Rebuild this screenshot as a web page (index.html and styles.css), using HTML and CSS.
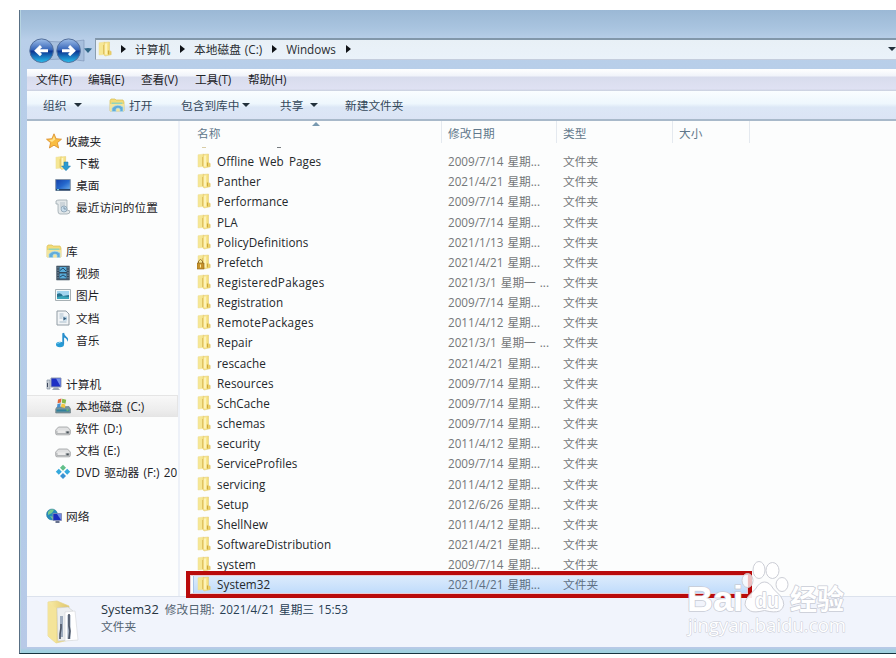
FILE: index.html
```html
<!DOCTYPE html>
<html lang="zh-CN">
<head>
<meta charset="utf-8">
<title>System32</title>
<link rel="stylesheet" href="styles.css">
</head>
<body>
<svg class="defs" width="0" height="0">
<defs>
<linearGradient id="gold" x1="0" x2="1"><stop offset="0" stop-color="#f3dc80"/><stop offset=".5" stop-color="#f8e78f"/><stop offset="1" stop-color="#e6c656"/></linearGradient>
<linearGradient id="orb" x1="0" x2="0" y1="0" y2="1"><stop offset="0" stop-color="#9dbde8"/><stop offset=".46" stop-color="#3565b8"/><stop offset=".52" stop-color="#0c3592"/><stop offset="1" stop-color="#28c0ee"/></linearGradient>
<linearGradient id="screen" x1="0" x2="1" y1="0" y2="1"><stop offset="0" stop-color="#163fa5"/><stop offset=".5" stop-color="#2467cc"/><stop offset="1" stop-color="#73b5f0"/></linearGradient>
<linearGradient id="big" x1="0" x2="1"><stop offset="0" stop-color="#f9eda9"/><stop offset="1" stop-color="#e0c568"/></linearGradient>
<symbol id="folder" viewBox="0 0 14 16"><path d="M1 1.800 7 1v12.500L1 14z" fill="#f6e794" stroke="#ecdc98" stroke-width=".5"/><path d="M6 1.500 11.500 1v8.500l1.700 1v3.200L7 15l-1-1.200z" fill="url(#gold)" stroke="#e3ca72" stroke-width=".5"/><path d="M5.500 4v9" stroke="#dfc261" stroke-width="1"/><path d="M8 2.500v11" stroke="#fff7c4" stroke-width="1.600"/><path d="M10.500 9.500v4" stroke="#cfa93c" stroke-width="1.200"/></symbol>
<symbol id="library" viewBox="0 0 16 16"><path d="M1 3.500 2 2h4l1 1h7l1 2v9H1z" fill="#f3dc78" stroke="#d8bd55" stroke-width=".7"/><path d="M2.500 5.500h11V9h-11z" fill="#93d5bc"/><path d="M1 7h14v7H1z" fill="#f2e59c"/><path d="M3 14.5V11q5-5 11-1v4.5h-3V12q-2-2-4 0v2.5z" fill="#61acd9" stroke="#aedaf0" stroke-width=".7"/></symbol>
<symbol id="drive" viewBox="0 0 16 16"><path d="M3.500 7h9L15.300 10v3.500q0 1.300-1.300 1.300H2q-1.300 0-1.300-1.300V10z" fill="#e0e1e2" stroke="#9a9c9e" stroke-width=".8"/><path d="M1.300 11h13.400v3H1.300z" fill="#b2b5b7"/><path d="M2.500 10.500h8v2.500h-8z" fill="#ececec"/><path d="M11.500 11.500h2.200v1.800h-2.200z" fill="#475057"/></symbol>
</defs>
</svg>
<main class="window">
  <header class="address-row">
    <svg class="orbs" viewBox="0 0 66 27"><path d="M11 2q22 4 44 0v21q-22-4-44 0z" fill="#a7bfdd" stroke="#7a91b3" stroke-width=".6"/><circle cx="12.6" cy="12.700" r="11.8" fill="url(#orb)" stroke="#536f9b"/><circle cx="39.6" cy="12.700" r="11.8" fill="url(#orb)" stroke="#536f9b"/><path d="M12 8.200 7.3 12.700l4.7 4.5M8 12.700h11M40 8.200l4.700 4.500-4.700 4.500M44 12.700H33" fill="none" stroke="#fff" stroke-width="3"/><path d="m55 10.500 4-.5 4 .5-4 4.500z" fill="#2f6688"/></svg>
    <div class="address">
      <svg class="folder" viewBox="0 0 14 16"><use href="#folder"/></svg>
      <i class="tri"></i><span>计算机</span><i class="tri"></i><span>本地磁盘 (C:)</span><i class="tri"></i><span>Windows</span><i class="tri"></i><i class="down"></i>
    </div>
  </header>
  <nav class="menu"><span>文件(F)</span><span>编辑(E)</span><span>查看(V)</span><span>工具(T)</span><span>帮助(H)</span></nav>
  <nav class="toolbar"><span>组织</span><i class="down"></i><svg class="icon" viewBox="0 0 16 16"><use href="#library"/></svg><span>打开</span><span>包含到库中</span><i class="down"></i><span>共享</span><i class="down"></i><span>新建文件夹</span></nav>
  <section class="body">
    <aside class="side">
      <div class="node"><svg class="icon" viewBox="0 0 16 16"><path d="m8 .8 2.100 4.900 5.400.5-4.100 3.500 1.200 5.300L8 12.200 3.400 15l1.200-5.300L.5 6.200l5.400-.5z" fill="#f9bd42" stroke="#d98b27" stroke-width=".8"/><path d="m8 3 1.200 3.500L6 9 3 7l3.500-.5z" fill="#ffe38e"/></svg><span>收藏夹</span></div>
      <div class="node child"><svg class="icon" viewBox="0 0 16 16"><use href="#folder" x="0" y="0" width="13" height="16"/><path d="M9 7h4v4h2.500L11 15.700 6.500 11H9z" fill="#2c9bd0" stroke="#207aa9" stroke-width=".5"/></svg><span>下载</span></div>
      <div class="node child"><svg class="icon" viewBox="0 0 16 16"><path d="M.7 2.500h14.600v11H.7z" fill="url(#screen)" stroke="#8494a8"/><path d="M1 12.700h14" stroke="#244066" stroke-width="1.500"/><path d="M2 12.700h2" stroke="#8ee1ee"/></svg><span>桌面</span></div>
      <div class="node child"><svg class="icon" viewBox="0 0 16 16"><path d="M1 2q1-1 3-1h8v10l3 1q0 3-3 3H5q-2 0-2-3V5H1z" fill="#e3e8ea" stroke="#9da8ae" stroke-width=".8"/><path d="M5 4h5M5 6h5M5 8h4" stroke="#a9b8c3" stroke-width=".8"/><circle cx="9" cy="10" r="3" fill="#c8dceb" stroke="#8098aa" stroke-width=".7"/><path d="M9 8v2h2" stroke="#617f94" fill="none" stroke-width=".7"/></svg><span>最近访问的位置</span></div>
      <div class="gap"></div>
      <div class="node"><svg class="icon" viewBox="0 0 16 16"><use href="#library"/></svg><span>库</span></div>
      <div class="node child"><svg class="icon" viewBox="0 0 16 16"><path d="M1.500 1h13v14h-13z" fill="#33485b" stroke="#687884" stroke-width=".7"/><path d="M4.500 2h7v5h-7zM4.500 8.500h7v5h-7z" fill="#58acd9"/><path d="M5 5.500 8 3l3 3M5 12l3-2 3 2" stroke="#254b69" fill="none"/><path d="M3 2v12M13 2v12" stroke="#8fa3b0" stroke-width=".9" stroke-dasharray="1.500 1"/></svg><span>视频</span></div>
      <div class="node child"><svg class="icon" viewBox="0 0 16 16"><path d="M.5 2.500h15v11H.5z" fill="#f5f8f8" stroke="#a7b0b4"/><path d="M2 4h12v8H2z" fill="#a1d4ee"/><path d="M2 7q4-2 6 2l6-1v4H2z" fill="#25718f"/><path d="m2 10 5-1 7 1v2H2z" fill="#3ba5b9"/></svg><span>图片</span></div>
      <div class="node child"><svg class="icon" viewBox="0 0 16 16"><path d="M2 1h9l3 3v11H2z" fill="#f2f5f7" stroke="#929da5"/><path d="M4.500 4h4M4.500 6h4M4.500 8h3M4.500 12h7" stroke="#a8bdcc"/><path d="M8 6.500h4v4H8z" fill="#b3d1e4"/><path d="m8.500 7 3 1.500-3 2z" fill="#385b78"/></svg><span>文档</span></div>
      <div class="node child"><svg class="icon" viewBox="0 0 16 16"><ellipse cx="5" cy="12.500" rx="4" ry="2.800" fill="#279bd5"/><path d="M7.300 12V1.200l1.800-.5q.2 2.800 2.600 4.300 2.700 2 .3 4.700.7-3-2.900-4.200v6.800z" fill="#298fcd"/><path d="M2.500 12q1-2 3-1.500" stroke="#8fd8f5" fill="none"/></svg><span>音乐</span></div>
      <div class="gap"></div>
      <div class="node"><svg class="icon" viewBox="0 0 16 16"><path d="M1 4h3v9H1z" fill="#c8ced6" stroke="#8390a1" stroke-width=".7"/><path d="M1.500 7v4" stroke="#39455a"/><path d="M5 2h10v9H5z" fill="#1c2ec4" stroke="#929cb0"/><path d="m10 2.500 4.500 0v8z" fill="#718bea"/><path d="M8 11.500h4l2 2.500H6z" fill="#9ba5b5"/></svg><span>计算机</span></div>
      <div class="node child active"><svg class="icon" viewBox="0 0 16 16"><path d="m2 9 12-.5 1.500 2.500v4H.7v-4z" fill="#75949d" stroke="#61747a" stroke-width=".6"/><path d="M1.500 11.500h13v2h-13z" fill="#2f809c"/><path d="M11.500 12h2" stroke="#90dc4f"/><path d="m3 1.500 3.500-1L6 4.500l-3.500.7z" fill="#df683c"/><path d="m7.200.7 4 1-.7 4-3.700-1z" fill="#85b94a"/><path d="m2.400 5.900 3.500-.6L5 9l-3 .7z" fill="#4691d0"/><path d="m6.600 5.600 3.800 1-.5 3.400-4-1z" fill="#f2c641"/></svg><span>本地磁盘 (C:)</span></div>
      <div class="node child"><svg class="icon" viewBox="0 0 16 16"><use href="#drive"/></svg><span>软件 (D:)</span></div>
      <div class="node child"><svg class="icon" viewBox="0 0 16 16"><use href="#drive"/></svg><span>文档 (E:)</span></div>
      <div class="node child"><svg class="icon" viewBox="0 0 16 16"><path d="m8 .8 3 3-3 3-3-3z" fill="#61bf8a"/><path d="m3.800 4.800 3 3-3 3-3-3zM12.200 4.800l3 3-3 3-3-3z" fill="#35a9dd"/><path d="m8 8.900 3 3-3 3-3-3z" fill="#3a93d4"/></svg><span>DVD 驱动器 (F:) 20</span></div>
      <div class="gap"></div>
      <div class="node"><svg class="icon" viewBox="0 0 16 16"><circle cx="6" cy="6.500" r="5.500" fill="#258bbb" stroke="#307b9d" stroke-width=".5"/><path d="M2 4q3-4 6-2L6 5 2 7zM4 8l4 1-1 3z" fill="#78ca8c"/><path d="M7 5.500h8.500v7H7z" fill="#1a2dbd" stroke="#858fb1" stroke-width=".8"/><path d="m11 6 4 0v6z" fill="#6f8be5"/><path d="M9.500 13h4v2h-4z" fill="#66718c"/></svg><span>网络</span></div>
    </aside>
    <div class="files">
      <div class="columns"><span>名称<svg class="sort" viewBox="0 0 8 4"><path d="m0 4 4-4 4 4z" fill="#7899b0"/></svg></span><span>修改日期</span><span>类型</span><span>大小</span></div>
      <div class="cut"><i></i><i></i></div>
      <div class="rows">
        <div class="row"><svg class="folder"><use href="#folder"/></svg><b>Offline Web Pages</b><span>2009/7/14 星期...</span><span>文件夹</span></div>
        <div class="row"><svg class="folder"><use href="#folder"/></svg><b>Panther</b><span>2021/4/21 星期...</span><span>文件夹</span></div>
        <div class="row"><svg class="folder"><use href="#folder"/></svg><b>Performance</b><span>2009/7/14 星期...</span><span>文件夹</span></div>
        <div class="row"><svg class="folder"><use href="#folder"/></svg><b>PLA</b><span>2009/7/14 星期...</span><span>文件夹</span></div>
        <div class="row"><svg class="folder"><use href="#folder"/></svg><b>PolicyDefinitions</b><span>2021/1/13 星期...</span><span>文件夹</span></div>
        <div class="row"><svg class="folder"><use href="#folder"/><path d="M1.500 9V7q2-3 4 0v2" fill="none" stroke="#9a7431"/><path d="M0 9h7v6H0z" fill="#c6922b" stroke="#8c651b" stroke-width=".6"/><path d="M3.500 10.500v3" stroke="#fff0a2"/></svg><b>Prefetch</b><span>2021/4/21 星期...</span><span>文件夹</span></div>
        <div class="row"><svg class="folder"><use href="#folder"/></svg><b class="wide">RegisteredPakages</b><span>2021/3/1 星期一 ...</span><span>文件夹</span></div>
        <div class="row"><svg class="folder"><use href="#folder"/></svg><b>Registration</b><span>2009/7/14 星期...</span><span>文件夹</span></div>
        <div class="row"><svg class="folder"><use href="#folder"/></svg><b class="wide">RemotePackages</b><span>2011/4/12 星期...</span><span>文件夹</span></div>
        <div class="row"><svg class="folder"><use href="#folder"/></svg><b>Repair</b><span>2021/3/1 星期一 ...</span><span>文件夹</span></div>
        <div class="row"><svg class="folder"><use href="#folder"/></svg><b>rescache</b><span>2021/4/21 星期...</span><span>文件夹</span></div>
        <div class="row"><svg class="folder"><use href="#folder"/></svg><b>Resources</b><span>2009/7/14 星期...</span><span>文件夹</span></div>
        <div class="row"><svg class="folder"><use href="#folder"/></svg><b>SchCache</b><span>2009/7/14 星期...</span><span>文件夹</span></div>
        <div class="row"><svg class="folder"><use href="#folder"/></svg><b>schemas</b><span>2009/7/14 星期...</span><span>文件夹</span></div>
        <div class="row"><svg class="folder"><use href="#folder"/></svg><b>security</b><span>2011/4/12 星期...</span><span>文件夹</span></div>
        <div class="row"><svg class="folder"><use href="#folder"/></svg><b>ServiceProfiles</b><span>2009/7/14 星期...</span><span>文件夹</span></div>
        <div class="row"><svg class="folder"><use href="#folder"/></svg><b>servicing</b><span>2011/4/12 星期...</span><span>文件夹</span></div>
        <div class="row"><svg class="folder"><use href="#folder"/></svg><b>Setup</b><span>2012/6/26 星期...</span><span>文件夹</span></div>
        <div class="row"><svg class="folder"><use href="#folder"/></svg><b>ShellNew</b><span>2011/4/12 星期...</span><span>文件夹</span></div>
        <div class="row"><svg class="folder"><use href="#folder"/></svg><b>SoftwareDistribution</b><span>2021/4/21 星期...</span><span>文件夹</span></div>
        <div class="row"><svg class="folder"><use href="#folder"/></svg><b>system</b><span>2009/7/14 星期...</span><span>文件夹</span></div>
        <div class="row selected"><svg class="folder"><use href="#folder"/></svg><b>System32</b><span>2021/4/21 星期...</span><span>文件夹</span></div>
      </div>
    </div>
  </section>
  <footer class="details">
    <svg class="preview" viewBox="0 0 32 44"><path d="m1 2 9-1 12 5v34L9 43 1 36z" fill="url(#big)" stroke="#e5d48b" stroke-width=".7"/><path d="m10 8 11-1 5 4v29l-15 1z" fill="#eceef0" stroke="#c9ccce" stroke-width=".6"/><path d="m18 12 10-1 3 29-13 1z" fill="#fff" stroke="#d3d5d8" stroke-width=".6"/><path d="M14.500 16v21M22 15v24" stroke="#9eabbd" stroke-width="3"/><path d="M14 24v4l-1 6v5M22 14v12l1 5-1 8" fill="none" stroke="#4b5465" stroke-width="1.600"/><path d="m1 2 8 6v35l-8-7z" fill="#f4e49a"/></svg>
    <div><p><strong>System32</strong><em>修改日期:</em><span>2021/4/21 星期三 15:53</span></p><p class="kind">文件夹</p></div>
  </footer>
  <div class="callout"></div>
  <svg class="watermark" viewBox="0 0 166 80">
    <g fill="#fff" fill-opacity=".9" stroke="#ccced6" stroke-width="1"><ellipse cx="63.500" cy="20.500" rx="5.500" ry="7" fill-opacity=".75"/><ellipse cx="75" cy="10" rx="6" ry="8.500"/><ellipse cx="88.500" cy="10.500" rx="6.500" ry="8"/><ellipse cx="98" cy="24.500" rx="6" ry="7"/><path d="M80.500 22q-5 0-9 7l-7 7q-8 10 2 15 4 2 14-.5 10 2.500 15 .5 8-5 1-15l-7-7q-4-7-9-7z"/></g>
    <g fill="#fff" stroke="#c9ccd6" stroke-width="1.600" stroke-linejoin="round" paint-order="stroke"><text class="latin" x="3" y="50.500" font-size="35" textLength="56" lengthAdjust="spacingAndGlyphs">Bai</text><text class="latin" x="71" y="48" font-size="22" textLength="24" lengthAdjust="spacingAndGlyphs">du</text><text class="cjk" x="106" y="49.500" font-size="28" textLength="54" lengthAdjust="spacingAndGlyphs">经验</text><text class="url" x="4" y="72" font-size="18" stroke-width="1" textLength="158" lengthAdjust="spacingAndGlyphs">jingyan.baidu.com</text></g>
  </svg>
</main>
</body>
</html>
```

FILE: styles.css
```css
* { box-sizing: border-box; }
body { margin: 0; width: 896px; height: 658px; overflow: hidden; background: #fff; padding: 10px 0 4px 19px; font: 11.7px/16px "Open Sans", "Noto Sans CJK SC", sans-serif; color: #1d2226; }
.defs { position: absolute; }
.window { position: relative; height: 644px; display: flex; flex-direction: column; padding: 0 0 6px 7px; border-left: 1px solid #586f84; border-bottom: 1px solid #17353f; background: linear-gradient(180deg, #9bb8d5 0, #a9c4df 18px, #b9cfe9 30px, #b8cee9 60px, #b4cbe8 80%, #b8c9e7 638px, #a0d1df 641px); box-shadow: inset 1px 0 #b6d4e1; }
.address-row { height: 59px; flex: none; display: flex; padding-top: 28px; }
.orbs { width: 66px; height: 27px; margin-left: 2px; flex: none; }
.address { flex: 1; height: 22px; display: flex; align-items: center; padding-bottom: 2px; background: linear-gradient(#e8f0f6, #eaf2fa); border: 1px solid #8a9daf; border-top: 2px solid #8297aa; border-bottom-color: #c4cddd; border-right: 0; color: #292d31; word-spacing: 1px; }
.address > .folder { margin: 0 9px 0 2px; }
.address .tri { margin-right: 9px; }
.address span { margin-right: 10px; }
.address > .down { margin-left: auto; }
.tri { width: 0; height: 0; border: 4px solid transparent; border-left: 5px solid #101317; border-right: 0; flex: none; }
.down { width: 0; height: 0; border: 4px solid transparent; border-top: 4.5px solid #22303b; border-bottom: 0; flex: none; }
.menu { height: 22px; flex: none; display: grid; grid-template-columns: 52px 53px 54px 53px 60px; padding: 0 0 2px 9px; align-items: center; background: linear-gradient(#fff, #f1f4fa 30%, #d8dced 38%, #dfe1f3 90%, #c9d0de); letter-spacing: -.1px; }
.toolbar { height: 30px; flex: none; display: grid; grid-template-columns: 33px 33px 20px 52px 63px 36px 32px 33px 70px; padding-left: 16px; align-items: center; background: linear-gradient(#fafdff, #eef7fd 45%, #dce7f6 58%, #dbe4f5); border-bottom: 2px solid #a8b9ca; color: #34485a; }
.toolbar .down { margin-left: -2px; }
.icon { width: 16px; height: 16px; flex: none; }
.folder { width: 14px; height: 16px; flex: none; }
.body { flex: 1; min-height: 0; display: flex; background: #fcfdfd; }
.side { width: 153px; border-right: 2px solid #edf1f8; padding-top: 9px; flex: none; overflow: hidden; word-spacing: 1.2px; }
.node { height: 22.07px; display: flex; align-items: center; gap: 4px; padding-left: 19px; white-space: nowrap; }
.node.child { padding-left: 28px; gap: 5px; }
.gap { height: 22.07px; }
.active { background: linear-gradient(#f8f8f8, #ededed 70%, #e6e6e6); border: 1px solid #e5e5e5; border-left: 0; }
.files { flex: 1; min-width: 0; }
.columns { height: 22px; display: grid; grid-template-columns: 262px 115px 116px 77px; color: #61788b; }
.columns span { border-right: 1px solid #e4e9ef; padding: 4px 0 0 6px; }
.columns span:first-child { padding-left: 17px; position: relative; }
.sort { position: absolute; width: 8px; height: 4px; left: 132px; top: 1px; }
.cut { height: 8px; display: flex; padding: 4px 0 0 22px; gap: 71px; }
.cut i { width: 4px; height: 1px; background: #777c80; }
.cut i:first-child { background: #d8cda6; }
.row { height: 20.17px; display: grid; grid-template-columns: 20px 231px 115px 100px; align-items: center; padding-left: 17px; color: #747779; white-space: nowrap; word-spacing: 1px; }
.row b { font-weight: 400; color: #24282b; letter-spacing: .06px; word-spacing: 2px; }
.row b.wide { letter-spacing: .3px; }
.selected { margin-left: 13px; width: 557px; grid-template-columns: 20px 231px 115px 100px; padding-left: 4px; background: linear-gradient(#dfedfc, #bfdbfb); box-shadow: inset 0 0 0 1px #a8c5e9; color: #5d6f83; }
.details { height: 51px; flex: none; display: flex; background: #f1f4fc; border-top: 1px solid #dce2ed; }
.preview { width: 32px; height: 44px; margin: 3px 22px 0 20px; }
.details p { margin: 4px 0 0; height: 16px; color: #536371; white-space: nowrap; word-spacing: 1px; }
.details .kind { margin-top: 1px; }
.details strong { font-size: 12.8px; font-weight: 400; color: #26333f; margin-right: 6px; }
.details em { font-style: normal; margin-right: 5px; }
.details span { color: #283f54; }
.callout { position: absolute; left: 166px; top: 561px; width: 566px; height: 27px; border: 4px solid #b90b0b; box-shadow: inset 0 0 0 1px #e9cbd2; }
.watermark { position: absolute; left: 664px; top: 550px; width: 166px; height: 80px; }
.latin { font-family: "Liberation Sans", sans-serif; font-weight: 700; }
.cjk { font-family: "Noto Sans CJK SC", sans-serif; font-weight: 700; }
.url { font-family: "Open Sans", sans-serif; }
```
